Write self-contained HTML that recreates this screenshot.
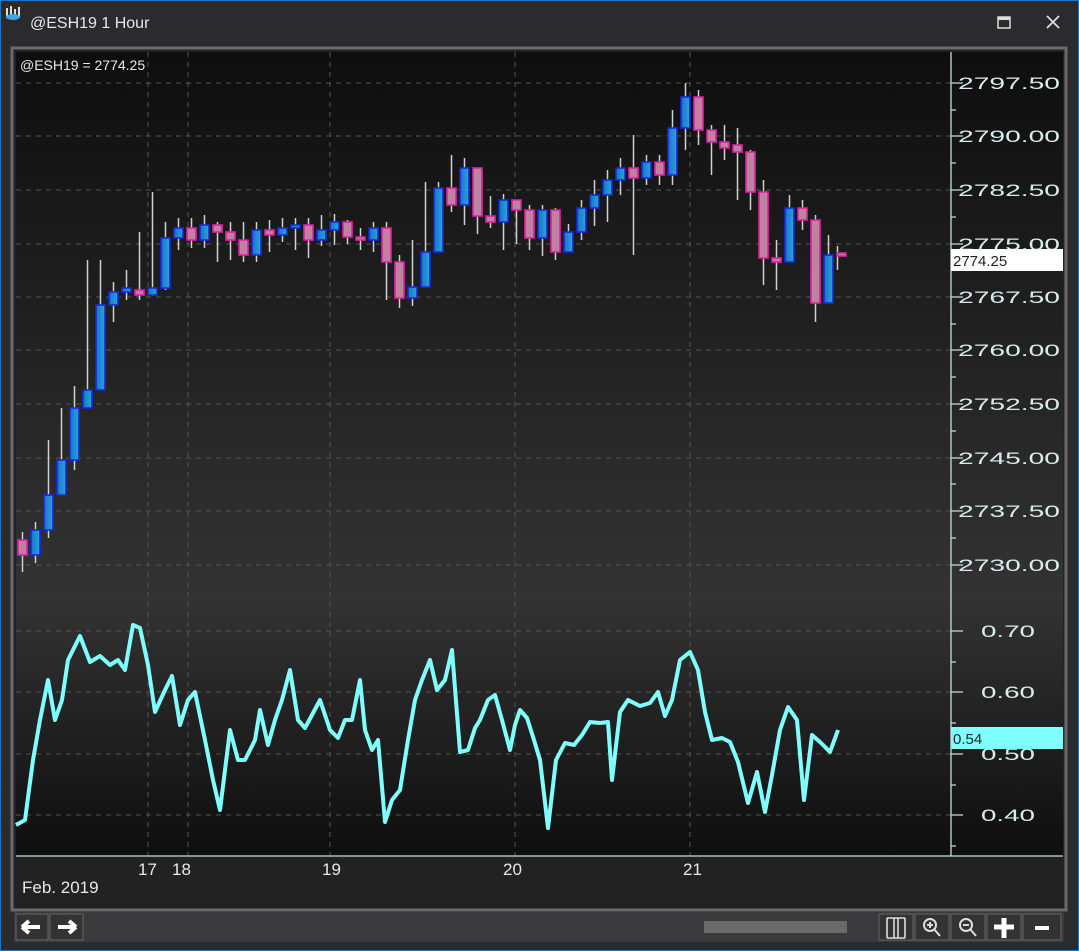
<!DOCTYPE html>
<html><head><meta charset="utf-8"><style>
body{margin:0;width:1079px;height:951px;background:#2b2b2d;overflow:hidden;font-family:"Liberation Sans",sans-serif;position:relative}
.win{position:absolute;left:0;top:0;width:1077px;height:949px;border:1px solid #1b78c8;background:#2b2b2d}
.ax{font-family:"Liberation Sans",sans-serif;font-size:17px;fill:#d8ecec}
</style></head><body><div class="win"></div>
<svg width="1079" height="951" style="position:absolute;left:0;top:0">
<defs>
<linearGradient id="bg" x1="0" y1="0" x2="0" y2="1">
<stop offset="0" stop-color="#0e0e0e"/><stop offset="0.68" stop-color="#333"/><stop offset="1" stop-color="#0e0e0e"/></linearGradient>
<linearGradient id="bl" x1="0" x2="1"><stop offset="0" stop-color="#1a70d0"/><stop offset="1" stop-color="#28a8d0"/></linearGradient>
</defs>
<g fill="#e0e0e0"><rect x="6" y="8" width="2" height="9"/><rect x="10" y="6" width="2" height="11"/><rect x="14" y="9" width="2" height="8"/><rect x="18" y="7" width="2" height="10"/></g>
<ellipse cx="13" cy="17" rx="7" ry="3" fill="#3aa8e8"/>
<text x="30" y="28" fill="#e8e8e8" font-size="16" font-family="Liberation Sans">@ESH19 1 Hour</text>
<rect x="998" y="17" width="12" height="11" fill="none" stroke="#ddd" stroke-width="1.5"/><rect x="998" y="17" width="12" height="3" fill="#ddd"/>
<path d="M1047 16 L1059 28 M1059 16 L1047 28" stroke="#ddd" stroke-width="1.8"/>
<rect x="12" y="48" width="1054" height="862" fill="#222" stroke="#6a6a6a" stroke-width="3"/>
<rect x="16" y="52" width="935" height="804" fill="url(#bg)"/>
<rect x="951" y="52" width="112" height="804" fill="url(#bg)"/>
<g stroke="#555" stroke-dasharray="5,5" stroke-width="1">
<path d="M148 52V856M188 52V856M330 52V856M515 52V856M690 52V856"/>
<path d="M16 83H951M16 136H951M16 190H951M16 244H951M16 297H951M16 350H951M16 404H951M16 458H951M16 511H951M16 565H951M16 631H951M16 692H951M16 754H951M16 815H951"/>
</g>
<text x="20" y="70" fill="#e8e8e8" font-size="14" font-family="Liberation Sans">@ESH19 = 2774.25</text>
<path d="M951 52V856M16 856H1063" stroke="#bfe0e0" stroke-width="1.3"/>
<g stroke="#bfe0e0" stroke-width="1.3"><path d="M951 83h12M951 110h5M951 136h12M951 163h5M951 190h12M951 217h5M951 244h12M951 270h5M951 297h12M951 324h5M951 350h12M951 377h5M951 404h12M951 431h5M951 458h12M951 484h5M951 511h12M951 538h5M951 565h12M951 631h12M951 662h5M951 692h12M951 723h5M951 754h12M951 785h5M951 815h12M951 846h5"/></g>
<g class="ax">
<text x="958" y="89" textLength="102" lengthAdjust="spacingAndGlyphs">2797.50</text><text x="958" y="142" textLength="102" lengthAdjust="spacingAndGlyphs">2790.00</text><text x="958" y="196" textLength="102" lengthAdjust="spacingAndGlyphs">2782.50</text><text x="958" y="250" textLength="102" lengthAdjust="spacingAndGlyphs">2775.00</text><text x="958" y="303" textLength="102" lengthAdjust="spacingAndGlyphs">2767.50</text><text x="958" y="356" textLength="102" lengthAdjust="spacingAndGlyphs">2760.00</text><text x="958" y="410" textLength="102" lengthAdjust="spacingAndGlyphs">2752.50</text><text x="958" y="464" textLength="102" lengthAdjust="spacingAndGlyphs">2745.00</text><text x="958" y="517" textLength="102" lengthAdjust="spacingAndGlyphs">2737.50</text><text x="958" y="571" textLength="102" lengthAdjust="spacingAndGlyphs">2730.00</text>
<text x="981" y="637" textLength="54" lengthAdjust="spacingAndGlyphs">0.70</text><text x="981" y="698" textLength="54" lengthAdjust="spacingAndGlyphs">0.60</text><text x="981" y="760" textLength="54" lengthAdjust="spacingAndGlyphs">0.50</text><text x="981" y="821" textLength="54" lengthAdjust="spacingAndGlyphs">0.40</text>
</g>
<rect x="951" y="249" width="112" height="22" fill="#fff"/><text x="953" y="266" font-size="15" fill="#222" font-family="Liberation Sans">2774.25</text>
<rect x="951" y="727" width="112" height="22" fill="#80ffff"/><text x="953" y="744" font-size="15" fill="#222" font-family="Liberation Sans">0.54</text>
<g stroke="#d0d0d0" stroke-width="1.5">
<path d="M22.5 532V572M35.5 522V563M48.5 440V538M61.5 408V468M74.5 386V470M87.5 260V400M100.5 260V330M113.5 282V322M126.5 270V300M139.5 232V300M152.5 192V296M165.5 222V290M178.5 218V250M191.5 218V248M204.5 215V248M217.5 222V262M230.5 222V260M243.5 222V262M256.5 222V262M269.5 220V252M282.5 218V242M295.5 218V250M308.5 218V258M321.5 215V246M334.5 214V245M347.5 220V244M360.5 228V250M373.5 222V252M386.5 222V300M399.5 255V308M412.5 240V306M425.5 182V262M438.5 182V214M451.5 155V212M464.5 158V225M477.5 212V234M490.5 196V228M503.5 194V250M516.5 200V244M529.5 205V250M542.5 205V256M555.5 208V260M568.5 224V250M581.5 200V240M594.5 180V226M607.5 170V222M620.5 158V195M633.5 135V255M646.5 155V185M659.5 155V185M672.5 110V185M685.5 83V150M698.5 90V145M711.5 125V175M724.5 125V160M737.5 128V200M750.5 150V210M763.5 180V285M776.5 240V290M789.5 195V250M802.5 200V230M815.5 215V322M828.5 235V270M837.5 246V270"/>
</g>
<g stroke-width="1.6">
<g fill="#c080a0" stroke="#e020a8">
<rect x="18" y="540" width="9" height="15"/><rect x="135" y="290" width="9" height="5"/><rect x="187" y="228" width="9" height="12"/><rect x="213" y="225" width="9" height="7"/><rect x="226" y="232" width="9" height="8"/><rect x="239" y="240" width="9" height="15"/><rect x="265" y="230" width="9" height="5"/><rect x="304" y="225" width="9" height="15"/><rect x="343" y="222" width="9" height="15"/><rect x="356" y="237" width="9" height="3"/><rect x="382" y="228" width="9" height="34"/><rect x="395" y="262" width="9" height="36"/><rect x="447" y="188" width="9" height="17"/><rect x="473" y="168" width="9" height="48"/><rect x="486" y="216" width="9" height="6"/><rect x="512" y="200" width="9" height="10"/><rect x="525" y="210" width="9" height="28"/><rect x="551" y="210" width="9" height="42"/><rect x="629" y="168" width="9" height="10"/><rect x="655" y="162" width="9" height="13"/><rect x="694" y="97" width="9" height="33"/><rect x="707" y="130" width="9" height="12"/><rect x="720" y="142" width="9" height="6"/><rect x="733" y="145" width="9" height="7"/><rect x="746" y="152" width="9" height="40"/><rect x="759" y="192" width="9" height="66"/><rect x="772" y="258" width="9" height="4"/><rect x="798" y="208" width="9" height="12"/><rect x="811" y="220" width="9" height="83"/><rect x="837" y="253" width="9" height="3"/>
</g>
<g fill="url(#bl)" stroke="#1828e0">
<rect x="31" y="530" width="9" height="25"/><rect x="44" y="495" width="9" height="35"/><rect x="57" y="460" width="9" height="35"/><rect x="70" y="408" width="9" height="52"/><rect x="83" y="390" width="9" height="18"/><rect x="96" y="305" width="9" height="85"/><rect x="109" y="292" width="9" height="13"/><rect x="122" y="288" width="9" height="4"/><rect x="148" y="288" width="9" height="7"/><rect x="161" y="238" width="9" height="50"/><rect x="174" y="228" width="9" height="10"/><rect x="200" y="225" width="9" height="15"/><rect x="252" y="230" width="9" height="25"/><rect x="278" y="228" width="9" height="7"/><rect x="291" y="225" width="9" height="3"/><rect x="317" y="230" width="9" height="10"/><rect x="330" y="222" width="9" height="8"/><rect x="369" y="228" width="9" height="12"/><rect x="408" y="287" width="9" height="11"/><rect x="421" y="252" width="9" height="35"/><rect x="434" y="188" width="9" height="64"/><rect x="460" y="168" width="9" height="37"/><rect x="499" y="200" width="9" height="22"/><rect x="538" y="210" width="9" height="28"/><rect x="564" y="232" width="9" height="20"/><rect x="577" y="208" width="9" height="24"/><rect x="590" y="195" width="9" height="13"/><rect x="603" y="180" width="9" height="15"/><rect x="616" y="168" width="9" height="12"/><rect x="642" y="162" width="9" height="16"/><rect x="668" y="128" width="9" height="47"/><rect x="681" y="97" width="9" height="31"/><rect x="785" y="208" width="9" height="54"/><rect x="824" y="255" width="9" height="48"/>
</g></g>
<polyline fill="none" stroke="#80ffff" stroke-width="4" stroke-linejoin="round" points="16,825 25,820 33,760 40,720 48,680 55,720 62,700 68,660 80,636 90,662 100,656 110,665 118,660 125,670 133,625 140,628 148,665 155,712 165,690 172,676 180,725 188,700 195,692 205,740 213,780 220,810 230,730 238,760 245,760 255,740 260,710 268,745 275,720 282,700 290,670 298,720 305,728 312,715 320,700 330,730 338,738 345,720 352,720 360,680 365,730 372,750 378,740 385,822 392,800 400,790 408,740 415,700 422,680 430,660 437,690 445,680 452,650 460,752 468,750 475,728 480,720 488,700 495,695 502,720 510,750 515,725 520,710 527,718 534,740 540,760 548,828 556,760 565,743 574,745 582,735 590,722 600,723 608,722 612,780 620,712 628,700 640,706 650,703 658,692 665,716 672,700 680,660 690,652 698,670 705,712 712,740 722,738 730,742 738,762 748,803 757,772 765,812 772,775 780,730 788,707 797,720 804,800 812,735 820,742 830,752 838,730"/>
<g fill="#e8e8e8" font-size="17" font-family="Liberation Sans">
<text x="138" y="875">17</text><text x="172" y="875">18</text><text x="322" y="875">19</text><text x="503" y="875">20</text><text x="683" y="875">21</text>
<text x="22" y="893">Feb. 2019</text></g>
<rect x="14" y="912" width="1050" height="30" fill="#3a3a3c"/>
<rect x="16" y="914" width="32" height="26" fill="#333" stroke="#666"/><rect x="50" y="914" width="33" height="26" fill="#333" stroke="#666"/>
<path d="M22 927h18M22 927l7-6M22 927l7 6" stroke="#fff" stroke-width="4" fill="none"/>
<path d="M76 927h-18M76 927l-7-6M76 927l-7 6" stroke="#fff" stroke-width="4" fill="none"/>
<rect x="704" y="921" width="143" height="12" fill="#6a6a6a"/>
<g fill="#333" stroke="#666"><rect x="879" y="914" width="34" height="26"/><rect x="915" y="914" width="34" height="26"/><rect x="951" y="914" width="34" height="26"/><rect x="987" y="914" width="34" height="26"/><rect x="1023" y="914" width="38" height="26"/></g>
<path d="M887 918v20M905 918v20M887 918h18M887 938h18M894 918v20M898 918v20" stroke="#ddd" stroke-width="1.6" fill="none"/>
<circle cx="930" cy="925" r="6" fill="none" stroke="#ddd" stroke-width="2"/><path d="M927 925h6M930 922v6M934 929l6 7" stroke="#ddd" stroke-width="2"/>
<circle cx="966" cy="925" r="6" fill="none" stroke="#ddd" stroke-width="2"/><path d="M963 925h6M970 929l6 7" stroke="#ddd" stroke-width="2"/>
<path d="M1004 918v20M994 927h20" stroke="#fff" stroke-width="5"/>
<path d="M1035 928h14" stroke="#fff" stroke-width="4"/>
</svg></body></html>
